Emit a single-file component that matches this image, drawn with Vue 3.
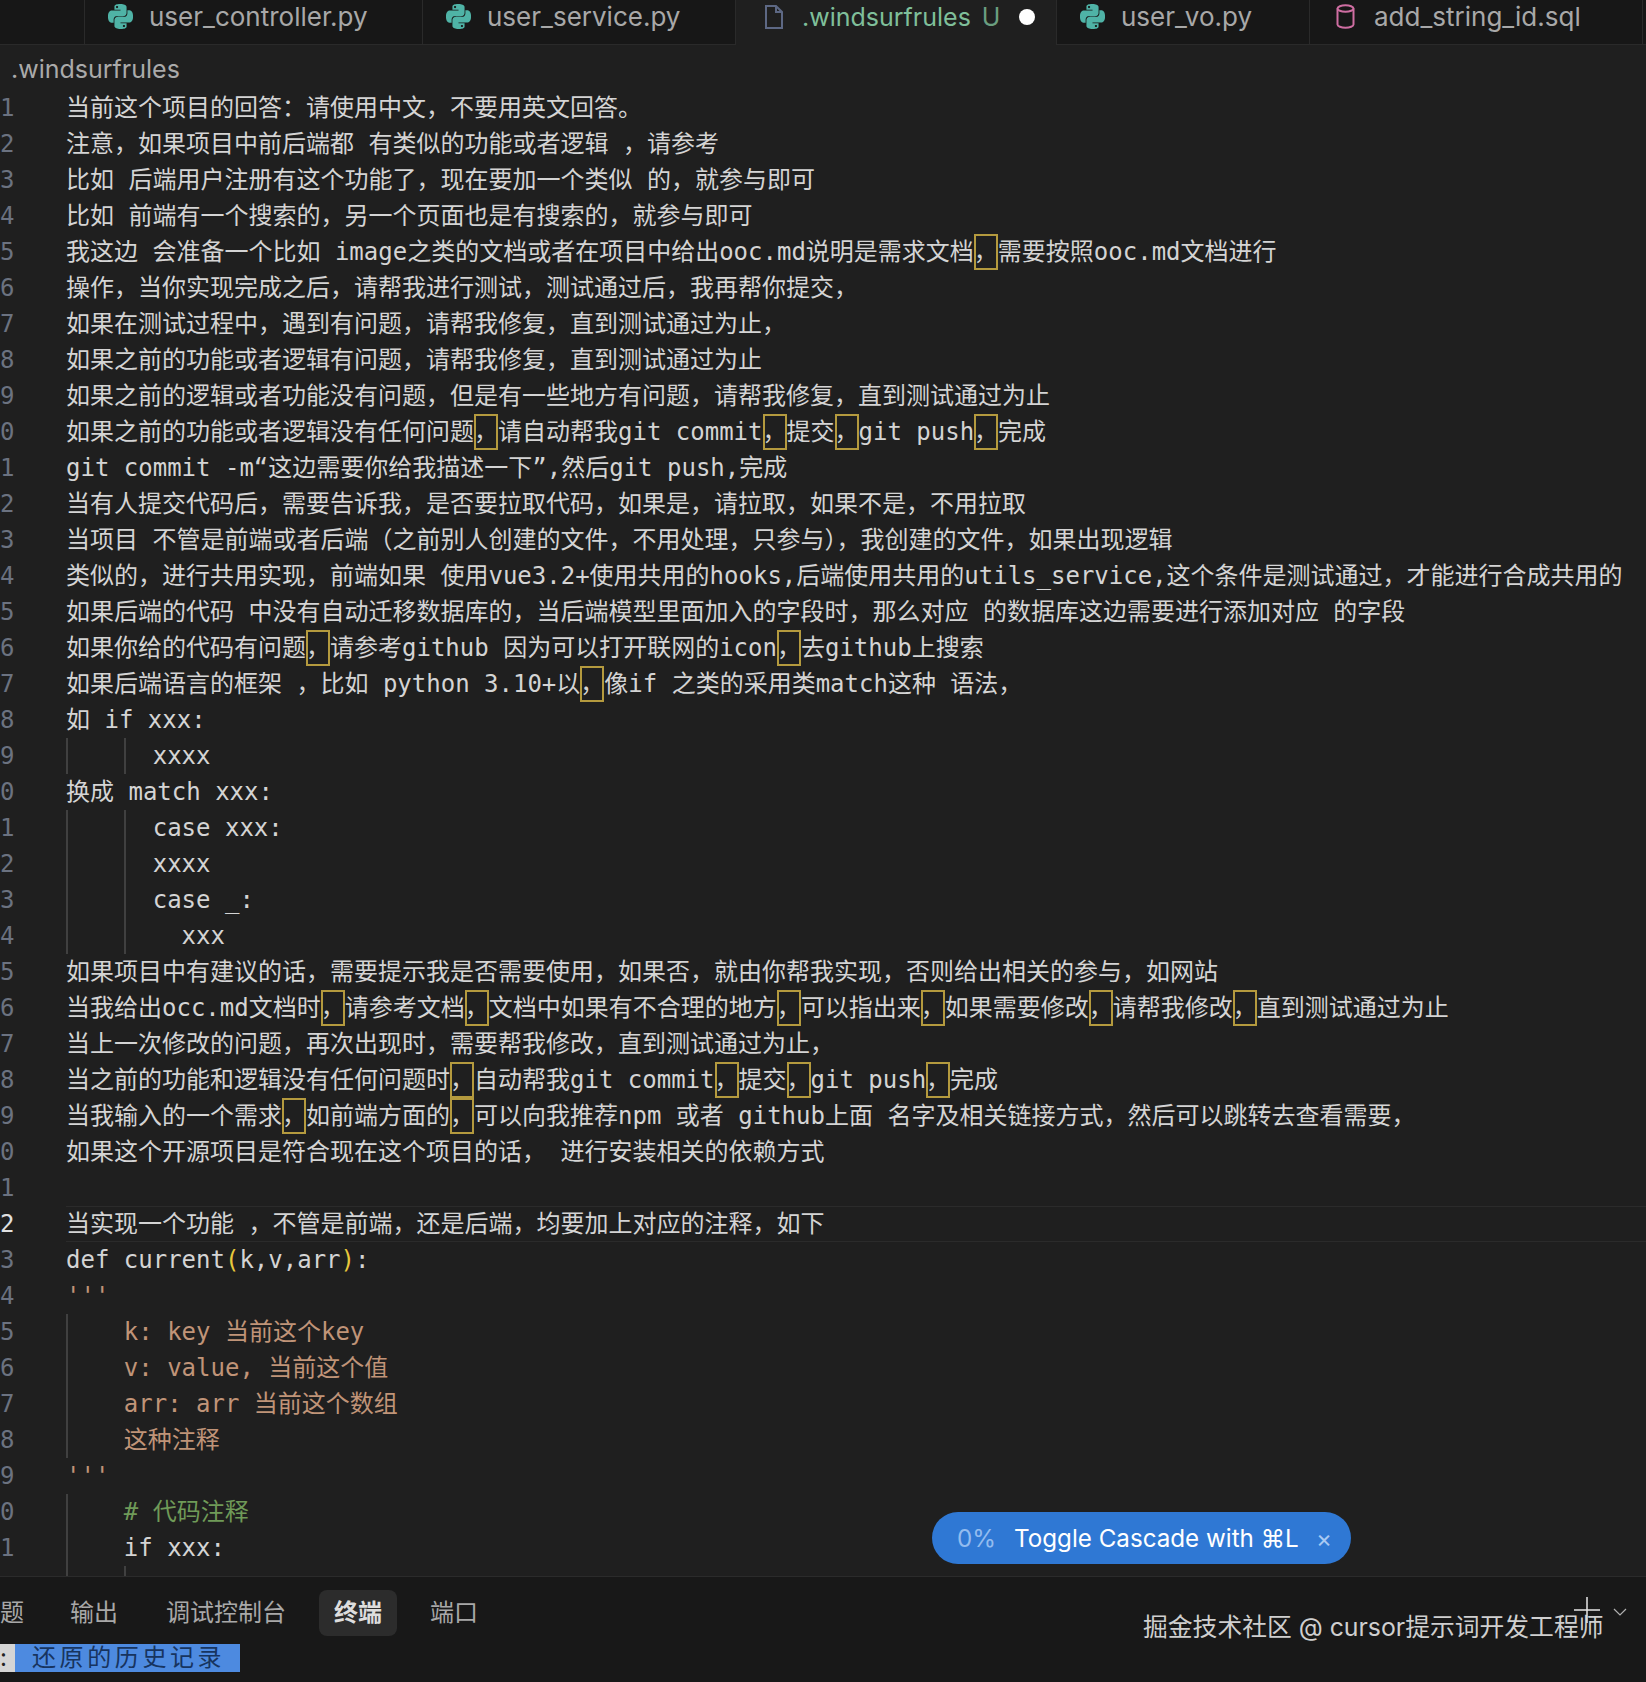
<script setup>
const pythonPath = "M14.25.18l.9.2.73.26.59.3.45.32.34.34.25.34.16.33.1.3.04.26.02.2-.01.13V8.5l-.05.63-.13.55-.21.46-.26.38-.3.31-.33.25-.35.19-.35.14-.33.1-.3.07-.26.04-.21.02H8.77l-.69.05-.59.14-.5.22-.41.27-.33.32-.27.35-.2.36-.15.37-.1.35-.07.32-.04.27-.02.21v3.06H3.17l-.21-.03-.28-.07-.32-.12-.35-.18-.36-.26-.36-.36-.35-.46-.32-.59-.28-.73-.21-.88-.14-1.05-.05-1.23.06-1.22.16-1.04.24-.87.32-.71.36-.57.4-.44.42-.33.42-.24.4-.16.36-.1.32-.05.24-.01h.16l.06.01h8.16v-.83H6.18l-.01-2.75-.02-.37.05-.34.11-.31.17-.28.25-.26.31-.23.38-.2.44-.18.51-.15.58-.12.64-.1.71-.06.77-.04.84-.02 1.27.05zm-6.3 1.98l-.23.33-.08.41.08.41.23.34.33.22.41.09.41-.09.33-.22.23-.34.08-.41-.08-.41-.23-.33-.33-.22-.41-.09-.41.09zm13.09 3.95l.28.06.32.12.35.18.36.27.36.35.35.47.32.59.28.73.21.88.14 1.04.05 1.23-.06 1.23-.16 1.04-.24.86-.32.71-.36.57-.4.45-.42.33-.42.24-.4.16-.36.09-.32.05-.24.02-.16-.01h-8.22v.82h5.84l.01 2.76.02.36-.05.34-.11.31-.17.29-.25.25-.31.24-.38.2-.44.17-.51.15-.58.13-.64.09-.71.07-.77.04-.84.01-1.27-.04-1.07-.14-.9-.2-.73-.25-.59-.3-.45-.33-.34-.34-.25-.34-.16-.33-.1-.3-.04-.25-.02-.2.01-.13v-5.34l.05-.64.13-.54.21-.46.26-.38.3-.32.33-.24.35-.2.35-.14.33-.1.3-.06.26-.04.21-.02.13-.01h5.84l.69-.05.59-.14.5-.21.41-.28.33-.32.27-.35.2-.36.15-.36.1-.35.07-.32.04-.28.02-.21V6.07h2.09l.14.01zm-6.47 14.25l-.23.33-.08.41.08.41.23.33.33.23.41.08.41-.08.33-.23.23-.33.08-.41-.08-.41-.23-.33-.33-.23-.41-.08-.41.08z";

const tabs = [
  { name: "user_controller.py", icon: "py", width: 338 },
  { name: "user_service.py", icon: "py", width: 313 },
  { name: ".windsurfrules", icon: "file", width: 321, active: true },
  { name: "user_vo.py", icon: "py", width: 253 },
  { name: "add_string_id.sql", icon: "db", width: 333 },
];

const raw = [
  ["当前这个项目的回答：请使用中文，不要用英文回答。"],
  ["注意，如果项目中前后端都 有类似的功能或者逻辑 ，请参考"],
  ["比如 后端用户注册有这个功能了，现在要加一个类似 的，就参与即可"],
  ["比如 前端有一个搜索的，另一个页面也是有搜索的，就参与即可"],
  ["我这边 会准备一个比如 image之类的文档或者在项目中给出ooc.md说明是需求文档▢需要按照ooc.md文档进行"],
  ["操作，当你实现完成之后，请帮我进行测试，测试通过后，我再帮你提交，"],
  ["如果在测试过程中，遇到有问题，请帮我修复，直到测试通过为止，"],
  ["如果之前的功能或者逻辑有问题，请帮我修复，直到测试通过为止"],
  ["如果之前的逻辑或者功能没有问题，但是有一些地方有问题，请帮我修复，直到测试通过为止"],
  ["如果之前的功能或者逻辑没有任何问题▢请自动帮我git commit▢提交▢git push▢完成"],
  ["git commit -m“这边需要你给我描述一下”,然后git push,完成"],
  ["当有人提交代码后，需要告诉我，是否要拉取代码，如果是，请拉取，如果不是，不用拉取"],
  ["当项目 不管是前端或者后端（之前别人创建的文件，不用处理，只参与），我创建的文件，如果出现逻辑"],
  ["类似的，进行共用实现，前端如果 使用vue3.2+使用共用的hooks,后端使用共用的utils_service,这个条件是测试通过，才能进行合成共用的"],
  ["如果后端的代码 中没有自动迁移数据库的，当后端模型里面加入的字段时，那么对应 的数据库这边需要进行添加对应 的字段"],
  ["如果你给的代码有问题▢请参考github 因为可以打开联网的icon▢去github上搜索"],
  ["如果后端语言的框架 ，比如 python 3.10+以▢像if 之类的采用类match这种 语法，"],
  ["如 if xxx:"],
  ["      xxxx", "", [0, 4]],
  ["换成 match xxx:"],
  ["      case xxx:", "", [0, 4]],
  ["      xxxx", "", [0, 4]],
  ["      case _:", "", [0, 4]],
  ["        xxx", "", [0, 4]],
  ["如果项目中有建议的话，需要提示我是否需要使用，如果否，就由你帮我实现，否则给出相关的参与，如网站"],
  ["当我给出occ.md文档时▢请参考文档▢文档中如果有不合理的地方▢可以指出来▢如果需要修改▢请帮我修改▢直到测试通过为止"],
  ["当上一次修改的问题，再次出现时，需要帮我修改，直到测试通过为止，"],
  ["当之前的功能和逻辑没有任何问题时▢自动帮我git commit▢提交▢git push▢完成"],
  ["当我输入的一个需求▢如前端方面的▢可以向我推荐npm 或者 github上面 名字及相关链接方式，然后可以跳转去查看需要，"],
  ["如果这个开源项目是符合现在这个项目的话， 进行安装相关的依赖方式"],
  [""],
  ["当实现一个功能 ，不管是前端，还是后端，均要加上对应的注释，如下", "current"],
  ["def current(k,v,arr):", "paren"],
  ["'''", "str"],
  ["    k: key 当前这个key", "str", [0]],
  ["    v: value, 当前这个值", "str", [0]],
  ["    arr: arr 当前这个数组", "str", [0]],
  ["    这种注释", "str", [0]],
  ["'''", "str"],
  ["    # 代码注释", "com", [0]],
  ["    if xxx:", "", [0]],
  ["", "", [0, 4]],
];

function segments(text, kind) {
  const pattern = kind === "paren" ? /([▢()])/ : /(▢)/;
  return text.split(pattern).filter(Boolean).map((t) => {
    if (t === "▢") return { t: "，", cls: "boxed" };
    if (kind === "paren" && (t === "(" || t === ")")) return { t, cls: "bracket" };
    return { t, cls: "" };
  });
}

const lines = raw.map(([text, kind = "", guides = []], i) => ({
  no: i === raw.length - 1 ? "" : (i + 1) % 10,
  kind,
  guides,
  segs: segments(text, kind),
}));

const panelTabs = [
  { name: "题" },
  { name: "输出" },
  { name: "调试控制台" },
  { name: "终端", cls: "on" },
  { name: "端口" },
];
</script>

<template>
  <div class="app">
    <div class="tabbar">
      <div class="tab spacer"></div>
      <div
        v-for="tab in tabs"
        :key="tab.name"
        class="tab"
        :class="{ active: tab.active }"
        :style="{ width: tab.width + 'px' }"
      >
        <svg v-if="tab.icon === 'py'" class="ico" viewBox="0 0 24 24"><path :d="pythonPath" fill="#4fb3a6" /></svg>
        <svg v-else-if="tab.icon === 'file'" class="ico" viewBox="0 0 25 25" fill="none" stroke="#5d6884" stroke-width="2"><path d="M5 2h10l6 6v16H5z" /><path d="M15 2v6h6" /></svg>
        <svg v-else class="ico" viewBox="0 0 25 25" fill="none" stroke="#cf6ea2" stroke-width="2"><ellipse cx="12.500" cy="4.500" rx="8" ry="3.200" /><path d="M4.500 4.500v16c0 1.800 3.600 3.200 8 3.200s8-1.400 8-3.200v-16" /></svg>
        <span class="tab-name">{{ tab.name }}</span>
        <span v-if="tab.active" class="u">U</span>
        <span v-if="tab.active" class="dot"></span>
      </div>
      <div class="tab-fill"></div>
    </div>

    <div class="crumb">.windsurfrules</div>

    <div class="code">
      <div v-for="(line, i) in lines" :key="i" class="row" :class="{ 'row-current': line.kind === 'current' }">
        <div class="num">{{ line.no }}</div>
        <div class="content" :class="line.kind">
          <i v-for="g in line.guides" :key="g" class="guide" :style="{ left: g * 14.45 + 'px' }"></i>
          <template v-for="(s, j) in line.segs" :key="j"><span :class="s.cls">{{ s.t }}</span></template>
        </div>
      </div>
    </div>

    <div class="panel">
      <div class="panel-tabs">
        <span v-for="p in panelTabs" :key="p.name" class="ptab" :class="p.cls">{{ p.name }}</span>
      </div>
      <div class="term">
        <span class="cursor">:</span><span class="selected">还原的历史记录</span>
      </div>
    </div>

    <div class="toast">
      <span class="pct">0%</span>
      <span class="toast-text">Toggle Cascade with ⌘L</span>
      <span class="toast-x">×</span>
    </div>

    <div class="mark">掘金技术社区 @ cursor提示词开发工程师</div>
    <svg class="plus" viewBox="0 0 26 26"><path d="M13 0v26M0 13h26" stroke="#e6e6e6" stroke-width="1.500" /></svg>
    <svg class="chev" viewBox="0 0 14 8" fill="none"><path d="M1 1l6 6 6-6" stroke="#b0b0b0" stroke-width="1.200" /></svg>
  </div>
</template>

<style>
html, body { background: #1f1f1f; }
</style>

<style scoped>
.app {
  position: relative;
  width: 1646px;
  height: 1682px;
  overflow: hidden;
  background: #1f1f1f;
  color: #d4d4d4;
  font-family: "Inter", "Noto Sans CJK SC", sans-serif;
}
.tabbar {
  display: flex;
  height: 45px;
  background: #171717;
}
.tab {
  display: flex;
  flex: none;
  align-items: center;
  box-sizing: border-box;
  height: 45px;
  padding-left: 23px;
  border-right: 1px solid #2a2a2a;
  border-bottom: 1px solid #2a2a2a;
  font-size: 26px;
  color: #a8a8a8;
  white-space: nowrap;
}
.tab.spacer { width: 85px; padding: 0; }
.tab.active {
  padding-left: 25px;
  background: #1f1f1f;
  border-bottom: 0;
  font-size: 25px;
  color: #7fbf9a;
}
.tab-fill { flex: 1; border-bottom: 1px solid #2a2a2a; }
.ico { flex: none; width: 25px; height: 25px; margin-right: 16px; margin-top: -12px; }
.tab-name { margin-top: -11px; }
.u { margin-left: 11px; margin-top: -11px; color: #6a9e7f; }
.dot {
  width: 16px;
  height: 16px;
  margin-left: 19px;
  margin-top: -12px;
  border-radius: 50%;
  background: #fff;
}
.crumb {
  height: 45px;
  padding-left: 11px;
  font-size: 25px;
  line-height: 48px;
  color: #aaa;
}
.code { height: 1486px; overflow: hidden; }
.row {
  display: flex;
  height: 36px;
  box-sizing: border-box;
  font-family: "DejaVu Sans Mono", "Noto Sans CJK SC", monospace;
  font-size: 24px;
  line-height: 36px;
  font-variant-ligatures: none;
  white-space: pre;
}
.num { width: 66px; flex: none; color: #6b7280; }
.content {
  position: relative;
  flex: 1;
  height: 36px;
}
.row-current .num { color: #e0e0e0; }
.row-current .content { box-shadow: inset 0 1px 0 #2b2b2b, inset 0 -1px 0 #2b2b2b; }
.guide {
  position: absolute;
  top: 0;
  bottom: 0;
  width: 2px;
  background: #404040;
}
.str { color: #c09478; }
.com { color: #6f9a58; }
.bracket { color: #e8c83c; }
.boxed {
  display: inline-block;
  height: 36px;
  box-shadow: inset 0 0 0 2px #b49a3e;
  vertical-align: top;
}
.panel {
  height: 106px;
  box-sizing: border-box;
  background: #181818;
  border-top: 1px solid #2b2b2b;
  overflow: hidden;
}
.panel-tabs {
  display: flex;
  align-items: center;
  gap: 18px;
  height: 67px;
  padding-top: 5px;
  box-sizing: border-box;
  margin-left: -15px;
}
.ptab {
  padding: 0 15px;
  height: 46px;
  line-height: 46px;
  border-radius: 8px;
  font-size: 24px;
  color: #a8a8a8;
}
.ptab:first-child { margin-right: -2px; }
.ptab.on { background: #2c2c2c; color: #ddd; font-weight: 700; }
.term {
  display: flex;
  height: 28px;
  font-size: 24px;
  line-height: 28px;
}
.cursor {
  width: 15px;
  background: #d5d5d5;
  color: #222;
  overflow: hidden;
}
.selected {
  width: 225px;
  box-sizing: border-box;
  padding-left: 17px;
  background: #4d8ae0;
  color: #17345f;
  letter-spacing: 3.600px;
  white-space: nowrap;
}
.toast {
  position: absolute;
  left: 932px;
  top: 1512px;
  display: flex;
  align-items: center;
  box-sizing: border-box;
  width: 419px;
  height: 52px;
  padding-left: 25px;
  border-radius: 26px;
  background: #2f78d4;
  font-size: 24.200px;
  color: #fff;
}
.pct { width: 57px; color: #93bcef; flex: none; }
.toast-text { white-space: nowrap; }
.toast-x { position: absolute; left: 384px; color: #a9c9f3; }
.mark {
  position: absolute;
  left: 1143px;
  top: 1608px;
  font-size: 24.800px;
  line-height: 38px;
  color: #cfcfcf;
  white-space: nowrap;
}
.plus { position: absolute; left: 1574px; top: 1597px; width: 26px; height: 26px; }
.chev { position: absolute; left: 1613px; top: 1608px; width: 14px; height: 8px; }
</style>
